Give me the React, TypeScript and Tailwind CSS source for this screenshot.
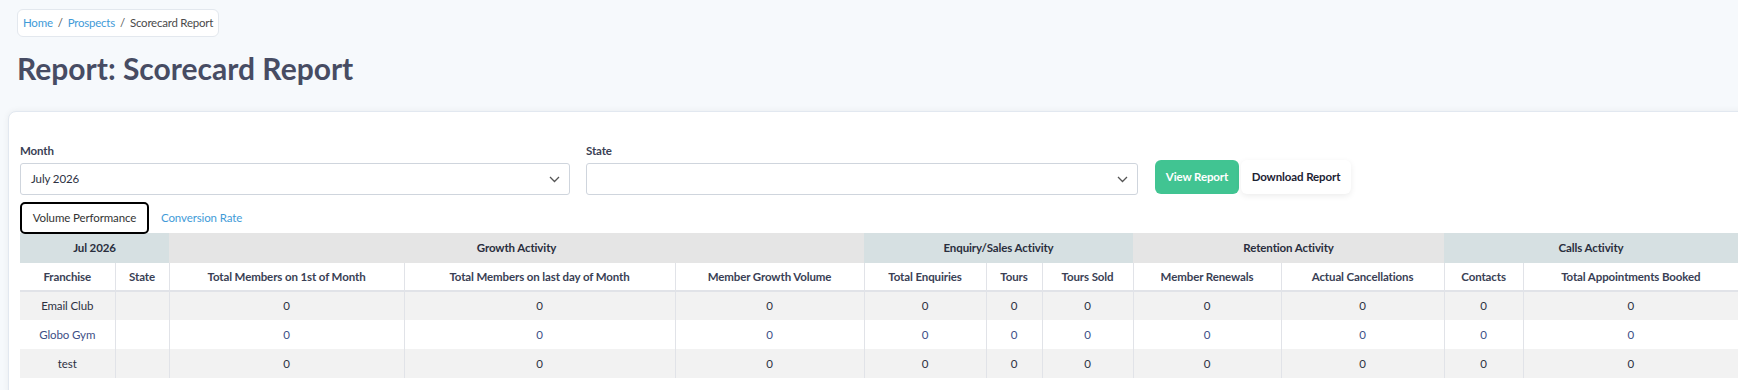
import React from "react";

const groups = [
  { label: "Jul 2026", span: 2, bg: "bg-[#d6e0e2]" },
  { label: "Growth Activity", span: 3, bg: "bg-[#e5e5e5]" },
  { label: "Enquiry/Sales Activity", span: 3, bg: "bg-[#d6e0e2]" },
  { label: "Retention Activity", span: 2, bg: "bg-[#e5e5e5]" },
  { label: "Calls Activity", span: 2, bg: "bg-[#d6e0e2]" },
];

const cols = [
  { label: "Franchise", w: 95 },
  { label: "State", w: 54 },
  { label: "Total Members on 1st of Month", w: 235 },
  { label: "Total Members on last day of Month", w: 271 },
  { label: "Member Growth Volume", w: 189 },
  { label: "Total Enquiries", w: 122 },
  { label: "Tours", w: 56 },
  { label: "Tours Sold", w: 91 },
  { label: "Member Renewals", w: 148 },
  { label: "Actual Cancellations", w: 163 },
  { label: "Contacts", w: 79 },
  { label: "Total Appointments Booked", w: 215 },
];

const rows = [
  { name: "Email Club", bg: "bg-[#f2f2f2]", color: "text-[#2d3142]" },
  { name: "Globo Gym", bg: "bg-white", color: "text-[#3d4f86]" },
  { name: "test", bg: "bg-[#f2f2f2]", color: "text-[#2d3142]" },
];

function Chevron() {
  return (
    <svg width="11" height="7" viewBox="0 0 11 7" fill="none">
      <polyline points="1,1 5.5,5.5 10,1" stroke="#555" strokeWidth="1.3" />
    </svg>
  );
}

export default function App() {
  return (
    <div
      className="w-screen h-screen overflow-hidden bg-[#f6f9fc] text-[11.5px] tracking-[-0.01em]"
      style={{ fontFamily: "Lato, 'Open Sans', sans-serif" }}
    >
      <div className="pl-[17px] pt-[9px]">
        <div className="inline-flex h-[28px] items-center rounded-md border border-[#e3e8ee] bg-white px-[5px] text-[11.5px] tracking-[-0.02em]">
          <span className="text-[#3f9bd8]">Home</span>
          <span className="mx-[5px] text-[#555]">/</span>
          <span className="text-[#3f9bd8]">Prospects</span>
          <span className="mx-[5px] text-[#555]">/</span>
          <span className="text-[#4a4a4a]">Scorecard Report</span>
        </div>
        <h1 className="mt-[13px] h-[36px] text-[30px] leading-[36px] font-bold tracking-normal text-[#474c63]">
          Report: Scorecard Report
        </h1>
      </div>

      <div className="ml-[8px] mt-[25px] w-[1780px] rounded-lg border border-[#e2e8f0] bg-white pl-[11px] pt-[31px] pb-[20px] shadow-[0_0_6px_rgba(0,0,0,0.06)]">
        <div className="flex items-end">
          <div className="w-[550px]">
            <div className="mb-[4px] h-[16px] leading-[16px] font-bold text-[#3a3f55]">Month</div>
            <div className="flex h-[32px] items-center justify-between rounded-[3px] border border-[#cfd5dd] pl-[10px] pr-[9px] text-[#2d3142]">
              <span>July 2026</span>
              <Chevron />
            </div>
          </div>
          <div className="ml-[16px] w-[552px]">
            <div className="mb-[4px] h-[16px] leading-[16px] font-bold text-[#3a3f55]">State</div>
            <div className="flex h-[32px] items-center justify-end rounded-[3px] border border-[#cfd5dd] pr-[9px]">
              <Chevron />
            </div>
          </div>
          <button className="mb-[1px] ml-[17px] h-[34px] w-[84px] rounded-md bg-[#41c492] font-bold text-white">
            View Report
          </button>
          <button className="mb-[1px] ml-[2px] h-[34px] w-[110px] rounded-md bg-white font-bold text-[#1c2233] shadow-[0_2px_6px_rgba(0,0,0,0.08)]">
            Download Report
          </button>
        </div>

        <div className="mt-[7px] flex items-center">
          <div className="relative z-10 -mb-[1px] flex h-[32px] w-[129px] items-center justify-center rounded-[5px] border-2 border-black text-[#333]">
            Volume Performance
          </div>
          <div className="ml-[12px] text-[#3f9bd8]">Conversion Rate</div>
        </div>

        <table className="table-fixed border-collapse" style={{ width: 1718 }}>
          <colgroup>
            {cols.map((c) => (
              <col key={c.label} style={{ width: c.w }} />
            ))}
          </colgroup>
          <thead>
            <tr className="h-[30px]">
              {groups.map((g) => (
                <th
                  key={g.label}
                  colSpan={g.span}
                  className={`${g.bg} text-center font-bold text-[#2a2e3d]`}
                >
                  {g.label}
                </th>
              ))}
            </tr>
            <tr className="h-[28px] bg-white">
              {cols.map((c, i) => (
                <th
                  key={c.label}
                  className={`border-b-2 border-b-[#e1e3e8] text-center font-bold text-[#3a3f55] ${
                    i > 0 ? "border-l border-l-[#e1e3e8]" : ""
                  }`}
                >
                  {c.label}
                </th>
              ))}
            </tr>
          </thead>
          <tbody>
            {rows.map((r) => (
              <tr key={r.name} className={`h-[29px] ${r.bg}`}>
                {cols.map((c, i) => (
                  <td
                    key={c.label}
                    className={`text-center ${r.color} ${
                      i > 0 ? "border-l border-l-[#e1e3e8]" : ""
                    }`}
                  >
                    {i === 0 ? r.name : i === 1 ? "" : "0"}
                  </td>
                ))}
              </tr>
            ))}
          </tbody>
        </table>
      </div>
    </div>
  );
}
